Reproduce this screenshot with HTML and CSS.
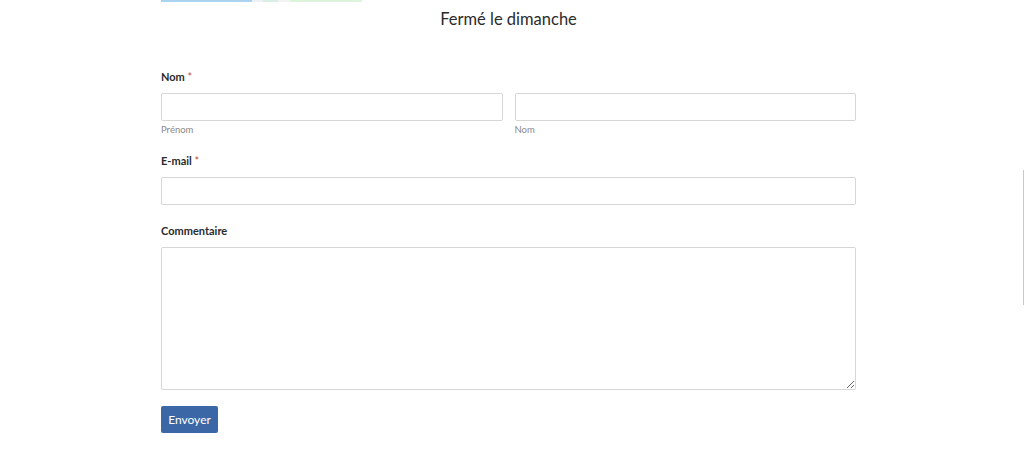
FILE: index.html
```html
<!DOCTYPE html>
<html lang="fr">
<head>
    <meta charset="UTF-8">
    <meta name="viewport" content="width=device-width, initial-scale=1.0">
    <title>Contact</title>
    <link rel="stylesheet" href="styles.css">
</head>
<body>
    <div class="page">
        <div class="map-edge">
            <span class="seg blue"></span>
            <span class="seg grey"></span>
            <span class="seg pale"></span>
            <span class="seg grey2"></span>
            <span class="seg green"></span>
        </div>
        <p class="hours">Fermé le dimanche</p>

        <form class="contact-form">
            <div class="field">
                <label class="field-label">Nom <span class="req">*</span></label>
                <div class="name-row">
                    <div class="sub">
                        <input type="text">
                        <span class="sub-label">Prénom</span>
                    </div>
                    <div class="sub">
                        <input type="text">
                        <span class="sub-label">Nom</span>
                    </div>
                </div>
            </div>

            <div class="field field-email">
                <label class="field-label">E-mail <span class="req">*</span></label>
                <input type="email">
            </div>

            <div class="field">
                <label class="field-label">Commentaire</label>
                <textarea></textarea>
            </div>

            <button type="button" class="send">Envoyer</button>
        </form>
    </div>
    <div class="scroll-line"></div>
</body>
</html>
```

FILE: styles.css
```css
body {
    margin: 0;
    background-color: #fff;
    font-family: Lato, "Noto Sans", sans-serif;
    color: #333;
}
.page {
    width: 695px;
    margin-left: 161px;
}
.map-edge {
    display: flex;
    height: 2px;
    width: 201px;
}
.seg {
    display: block;
    height: 2px;
}
.blue { width: 91px; background-color: #a9d3ee; }
.grey { width: 11px; background-color: #eef1f2; }
.pale { width: 15px; background-color: #d7f0e3; }
.grey2 { width: 12px; background-color: #f1f3f2; }
.green { width: 72px; background-color: #dcf3dc; }
.hours {
    margin: 6px 0 0;
    text-align: center;
    font-size: 16.5px;
    line-height: 22px;
    color: #2b2b2b;
}
.contact-form {
    margin-top: 40px;
}
.field {
    margin-bottom: 18px;
}
.field-email {
    margin-bottom: 19px;
}
.field-label {
    display: block;
    font-size: 11px;
    font-weight: 700;
    color: #2b2b2b;
    line-height: 14px;
    margin-bottom: 9px;
}
.req {
    color: #c0504d;
    font-weight: 400;
}
.name-row {
    display: flex;
    gap: 12px;
}
.sub {
    flex: 1;
}
.sub-label {
    display: block;
    font-size: 9.5px;
    color: #8a8a8a;
    line-height: 12px;
    margin-top: 3px;
}
input, textarea {
    display: block;
    box-sizing: border-box;
    width: 100%;
    height: 28px;
    border: 1px solid #d6d6d6;
    border-radius: 2px;
    background-color: #fff;
    font: inherit;
}
textarea {
    height: 143px;
    resize: vertical;
}
.send {
    margin-top: -2px;
    background-color: #3c67a6;
    color: #fff;
    border: none;
    border-radius: 2px;
    font-family: inherit;
    font-size: 12px;
    width: 57px;
    height: 27px;
    padding: 0;
}
.scroll-line {
    position: fixed;
    right: 0;
    top: 170px;
    width: 1px;
    height: 135px;
    background-color: #c8c8c8;
}
```
